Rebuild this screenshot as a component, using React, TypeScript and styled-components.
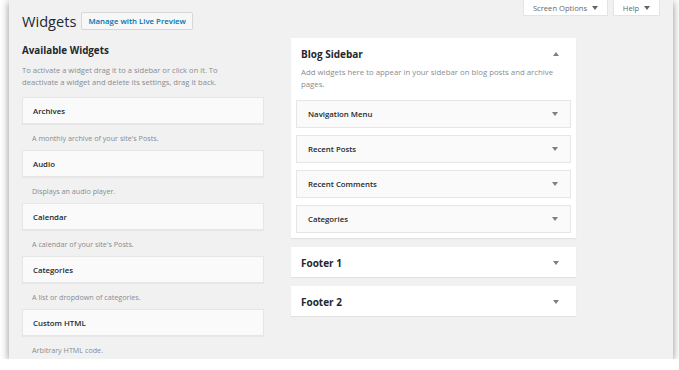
import React from 'react';
import styled, { createGlobalStyle } from 'styled-components';

const GlobalStyle = createGlobalStyle`
  html, body {
    margin: 0;
    padding: 0;
    background: #fff;
  }
  body {
    font-family: "Open Sans", "Noto Sans", sans-serif;
    overflow: hidden;
  }
`;

const Screen = styled.div`
  box-sizing: border-box;
  width: 664px;
  height: 359px;
  margin-left: 9px;
  padding: 0 13px;
  background: #f1f1f1;
  box-shadow: 0 2px 8px rgba(0, 0, 0, 0.45);
  overflow: hidden;
`;

const TopBar = styled.div`
  display: flex;
  justify-content: space-between;
  align-items: flex-start;
  height: 38px;
`;

const TitleRow = styled.div`
  display: flex;
  align-items: center;
  gap: 5px;
  margin-top: 11px;
`;

const PageTitle = styled.h1`
  margin: 0;
  font-size: 14.6px;
  font-weight: 400;
  line-height: 20px;
  color: #23282d;
`;

const PreviewButton = styled.button`
  box-sizing: border-box;
  height: 18px;
  padding: 0 6px;
  border: 1px solid #d5d8db;
  border-radius: 2px;
  background: #f7f7f7;
  color: #0073aa;
  font-family: inherit;
  font-size: 7.8px;
  font-weight: 600;
`;

const ScreenMeta = styled.div`
  display: flex;
  gap: 5px;
`;

const MetaTab = styled.button<{ $width: number }>`
  box-sizing: border-box;
  width: ${p => p.$width}px;
  height: 16px;
  display: flex;
  align-items: center;
  justify-content: center;
  gap: 5px;
  border: 1px solid #e2e4e7;
  border-top: none;
  background: #fff;
  color: #666;
  font-family: inherit;
  font-size: 7.6px;
`;

const Columns = styled.div`
  display: flex;
  align-items: flex-start;
  gap: 27px;
`;

const LeftColumn = styled.div`
  width: 242px;
`;

const SectionTitle = styled.h2`
  margin: 5px 0 0;
  font-size: 9.8px;
  font-weight: 700;
  line-height: 16px;
  color: #23282d;
`;

const HelpText = styled.p`
  margin: 5px 0 9px;
  font-size: 7.6px;
  line-height: 12px;
  color: #888c91;
`;

const WidgetBox = styled.div`
  box-sizing: border-box;
  height: 27px;
  display: flex;
  align-items: center;
  padding: 0 10px;
  border: 1px solid #e6e6e6;
  background: #fafafa;
  box-shadow: 0 1px 1px rgba(0, 0, 0, 0.04);
  font-size: 7.8px;
  font-weight: 600;
  color: #23282d;
`;

const WidgetDesc = styled.div`
  box-sizing: border-box;
  height: 26px;
  padding: 8px 10px 0;
  font-size: 7.2px;
  line-height: 12px;
  color: #888c91;
`;

const RightColumn = styled.div`
  width: 285px;
  display: flex;
  flex-direction: column;
  gap: 9px;
`;

const Panel = styled.div`
  background: #fff;
  box-shadow: 0 1px 1px rgba(0, 0, 0, 0.06);
`;

const PanelHeader = styled.div`
  height: 30px;
  display: flex;
  align-items: center;
  justify-content: space-between;
  padding: 1px 17px 0 10px;
  box-sizing: border-box;
`;

const PanelTitle = styled.h3`
  margin: 0;
  font-size: 10px;
  font-weight: 700;
  color: #23282d;
`;

const PanelDesc = styled.p`
  margin: -2px 10px 10px;
  font-size: 7.8px;
  line-height: 12px;
  color: #888c91;
`;

const SidebarList = styled.div`
  display: flex;
  flex-direction: column;
  gap: 7px;
  padding: 0 5px 5px;
`;

const SidebarWidget = styled.div`
  box-sizing: border-box;
  height: 28px;
  display: flex;
  align-items: center;
  justify-content: space-between;
  padding: 0 12px 0 11px;
  border: 1px solid #e6e6e6;
  background: #fafafa;
  font-size: 7.8px;
  font-weight: 600;
  color: #23282d;
`;

const Caret = ({ up = false, color = '#7c8085' }: { up?: boolean; color?: string }) => (
  <svg width="6" height="4" viewBox="0 0 6 4">
    <polygon points={up ? '0,4 6,4 3,0' : '0,0 6,0 3,4'} fill={color} />
  </svg>
);

const available = [
  { name: 'Archives', desc: "A monthly archive of your site's Posts." },
  { name: 'Audio', desc: 'Displays an audio player.' },
  { name: 'Calendar', desc: "A calendar of your site's Posts." },
  { name: 'Categories', desc: 'A list or dropdown of categories.' },
  { name: 'Custom HTML', desc: 'Arbitrary HTML code.' },
];

const sidebarWidgets = ['Navigation Menu', 'Recent Posts', 'Recent Comments', 'Categories'];

export default function App() {
  return (
    <>
      <GlobalStyle />
      <Screen>
        <TopBar>
          <TitleRow>
            <PageTitle>Widgets</PageTitle>
            <PreviewButton>Manage with Live Preview</PreviewButton>
          </TitleRow>
          <ScreenMeta>
            <MetaTab $width={85}>
              Screen Options <Caret color="#666" />
            </MetaTab>
            <MetaTab $width={47}>
              Help <Caret color="#666" />
            </MetaTab>
          </ScreenMeta>
        </TopBar>
        <Columns>
          <LeftColumn>
            <SectionTitle>Available Widgets</SectionTitle>
            <HelpText>
              To activate a widget drag it to a sidebar or click on it. To
              <br />
              deactivate a widget and delete its settings, drag it back.
            </HelpText>
            {available.map(w => (
              <div key={w.name}>
                <WidgetBox>{w.name}</WidgetBox>
                <WidgetDesc>{w.desc}</WidgetDesc>
              </div>
            ))}
          </LeftColumn>
          <RightColumn>
            <Panel>
              <PanelHeader>
                <PanelTitle>Blog Sidebar</PanelTitle>
                <Caret up />
              </PanelHeader>
              <PanelDesc>
                Add widgets here to appear in your sidebar on blog posts and archive
                <br />
                pages.
              </PanelDesc>
              <SidebarList>
                {sidebarWidgets.map(name => (
                  <SidebarWidget key={name}>
                    {name}
                    <Caret />
                  </SidebarWidget>
                ))}
              </SidebarList>
            </Panel>
            <Panel>
              <PanelHeader>
                <PanelTitle>Footer 1</PanelTitle>
                <Caret />
              </PanelHeader>
            </Panel>
            <Panel>
              <PanelHeader>
                <PanelTitle>Footer 2</PanelTitle>
                <Caret />
              </PanelHeader>
            </Panel>
          </RightColumn>
        </Columns>
      </Screen>
    </>
  );
}
